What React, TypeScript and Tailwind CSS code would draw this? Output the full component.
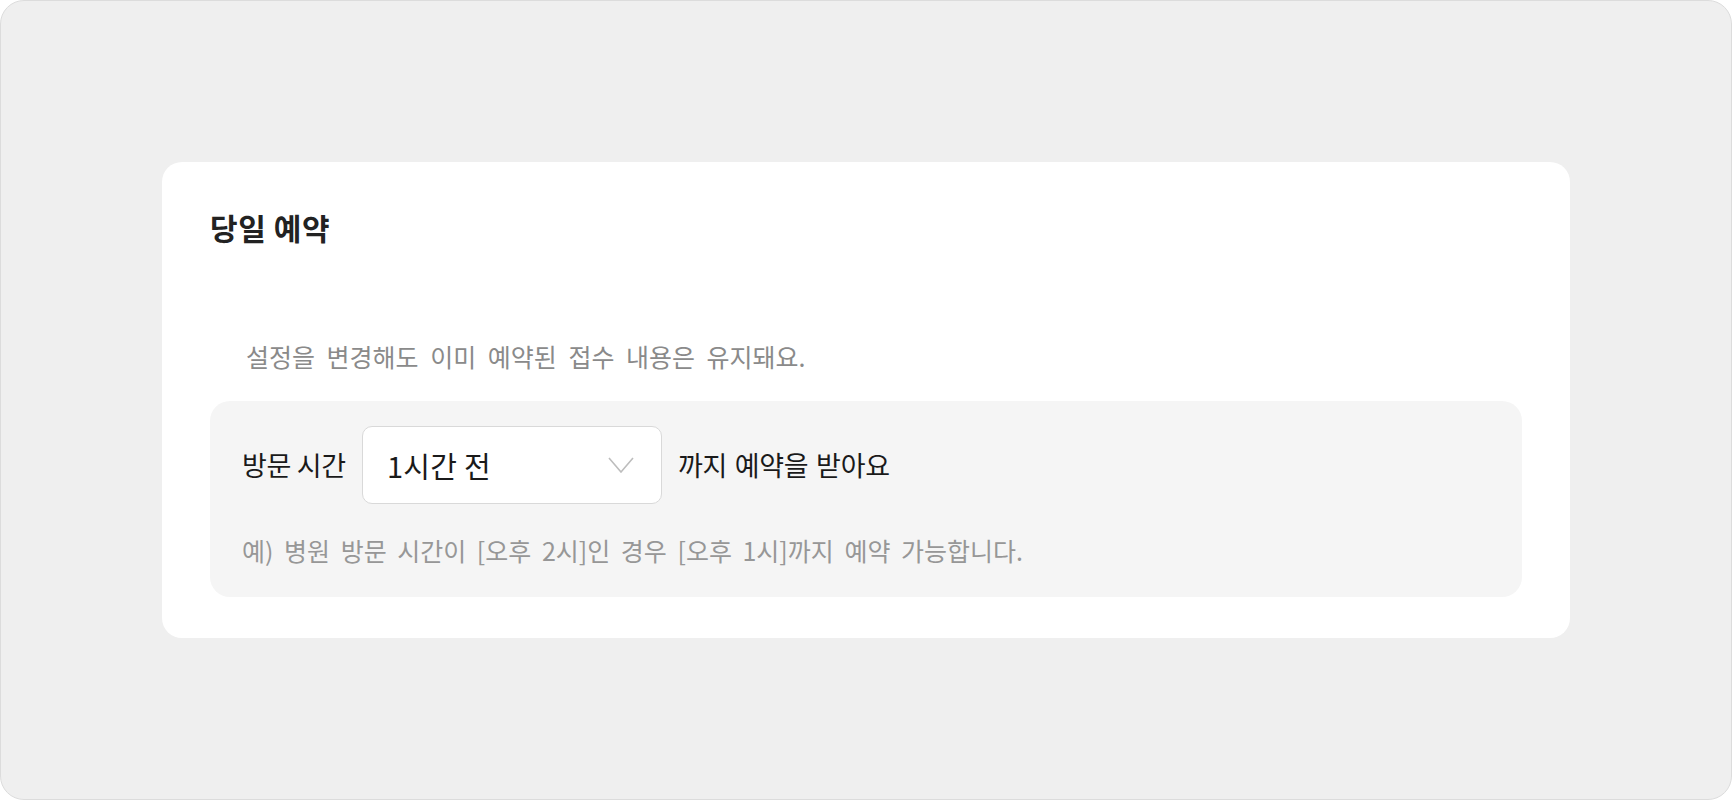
import React from "react";

const font = { fontFamily: '"Noto Sans CJK KR", "Noto Sans", sans-serif' };

export default function App() {
  return (
    <div className="w-[1732px] h-[800px] bg-white" style={font}>
      <div className="w-full h-full bg-[#efefef] border border-[#dcdcdc] rounded-[24px] flex items-center justify-center">
        <div className="w-[1408px] h-[476px] bg-white rounded-[20px] px-[48px] pt-[45px] flex flex-col">
          <h1 className="text-[30px] leading-[40px] font-bold text-[#222] tracking-[0.6px]">당일 예약</h1>
          <p className="mt-[93px] ml-[36px] text-[25px] leading-[32px] text-[#8a8a8a] [word-spacing:6px]">
            설정을 변경해도 이미 예약된 접수 내용은 유지돼요.
          </p>
          <div className="mt-[29px] h-[196px] bg-[#f5f5f5] rounded-[20px] pl-[32px] pt-[25px]">
            <div className="flex items-center gap-[16px]">
              <span className="text-[27px] leading-[32px] text-[#1a1a1a] tracking-[-0.3px]">방문 시간</span>
              <div className="w-[300px] h-[78px] bg-white border border-[#d9d9d9] rounded-[10px] flex items-center justify-between pl-[24px] pr-[27px]">
                <span className="text-[29px] leading-[32px] text-[#1a1a1a] tracking-[0.3px]">1시간 전</span>
                <svg width="26" height="16" viewBox="0 0 26 16" fill="none">
                  <polyline points="1,1 13,15 25,1" stroke="#bdbdbd" strokeWidth="1.6" fill="none" />
                </svg>
              </div>
              <span className="text-[27px] leading-[32px] text-[#1a1a1a] tracking-[-0.3px] [word-spacing:2px]">까지 예약을 받아요</span>
            </div>
            <p className="mt-[30px] text-[25px] leading-[32px] text-[#979797] [word-spacing:5px]">
              예) 병원 방문 시간이 [오후 2시]인 경우 [오후 1시]까지 예약 가능합니다.
            </p>
          </div>
        </div>
      </div>
    </div>
  );
}
